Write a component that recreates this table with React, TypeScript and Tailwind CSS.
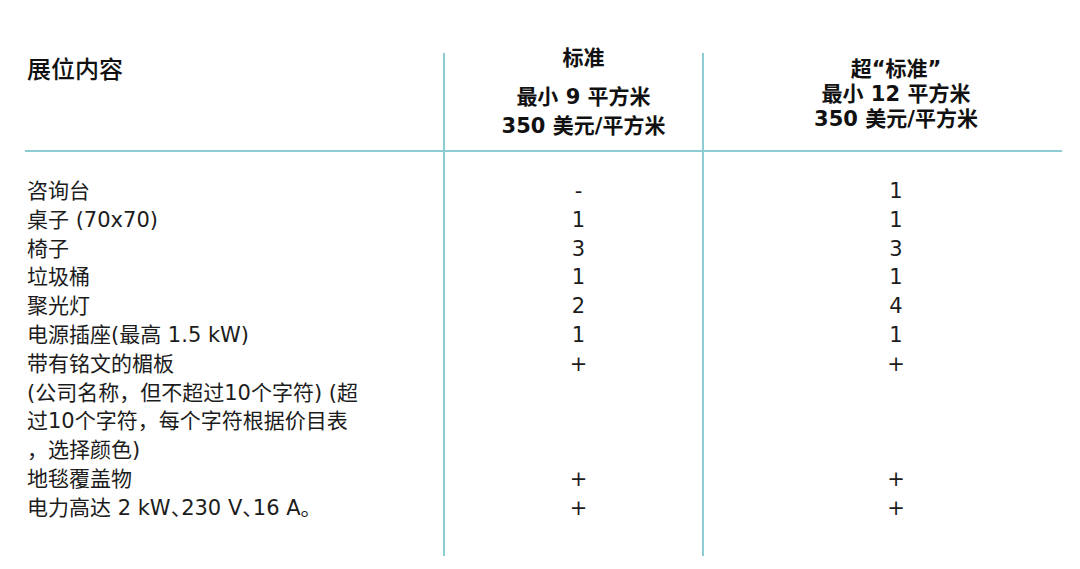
import React from "react";

const rows: { label: React.ReactNode[]; std: string; sup: string }[] = [
  { label: ["咨询台"], std: "-", sup: "1" },
  { label: ["桌子 (70x70)"], std: "1", sup: "1" },
  { label: ["椅子"], std: "3", sup: "3" },
  { label: ["垃圾桶"], std: "1", sup: "1" },
  { label: ["聚光灯"], std: "2", sup: "4" },
  { label: ["电源插座(最高 1.5 kW)"], std: "1", sup: "1" },
  {
    label: [
      "带有铭文的楣板",
      "(公司名称，但不超过10个字符) (超",
      "过10个字符，每个字符根据价目表",
      "，选择颜色)",
    ],
    std: "+",
    sup: "+",
  },
  { label: ["地毯覆盖物"], std: "+", sup: "+" },
  {
    label: [
      <>
        电力高达 2 kW<span className="[font-feature-settings:'halt']">、</span>230 V
        <span className="[font-feature-settings:'halt']">、</span>16 A。
      </>,
    ],
    std: "+",
    sup: "+",
  },
];

const App = () => {
  return (
    <div className="min-h-[569px] w-[1080px] bg-white pt-[53px] pl-[25px] font-['DejaVu_Sans','Noto_Sans_CJK_SC',sans-serif] text-[#1c1c1c]">
      <div className="grid w-[1037px] grid-cols-[420px_259px_358px]">
        {/* header */}
        <div className="h-[99px] border-r-2 border-b-2 border-[#8ccdd3] pl-[2px]">
          <h1 className="mt-[3px] text-[24px] leading-[28px] font-medium text-[#111]">展位内容</h1>
        </div>
        <div className="h-[99px] border-r-2 border-b-2 border-[#8ccdd3] pl-[20px] text-center text-[21px] font-bold text-[#111]">
          <div className="-mt-[9px] leading-[29px]">
            <p className="mb-[10px]">标准</p>
            <p>最小 9 平方米</p>
            <p>350 美元/平方米</p>
          </div>
        </div>
        <div className="h-[99px] border-b-2 border-[#8ccdd3] pl-[26px] text-center text-[21px] font-bold text-[#111]">
          <div className="mt-[4px] leading-[25px]">
            <p>超“标准”</p>
            <p>最小 12 平方米</p>
            <p>350 美元/平方米</p>
          </div>
        </div>

        {/* body */}
        <div className="flex flex-col border-r-2 border-[#8ccdd3] pt-[25px] pb-[33px] pl-[2px] text-[21px] leading-[28.8px]">
          {rows.map((r, i) => (
            <div key={i}>
              {r.label.map((l, j) => (
                <p key={j} className="whitespace-nowrap">
                  {l}
                </p>
              ))}
            </div>
          ))}
        </div>
        <div className="flex flex-col border-r-2 border-[#8ccdd3] pt-[25px] pb-[33px] pl-[10px] text-center text-[21px] leading-[28.8px]">
          {rows.map((r, i) => (
            <div key={i} style={{ height: `${r.label.length * 28.8}px` }}>
              <p>{r.std}</p>
            </div>
          ))}
        </div>
        <div className="flex flex-col pt-[25px] pb-[33px] pl-[26px] text-center text-[21px] leading-[28.8px]">
          {rows.map((r, i) => (
            <div key={i} style={{ height: `${r.label.length * 28.8}px` }}>
              <p>{r.sup}</p>
            </div>
          ))}
        </div>
      </div>
    </div>
  );
};

export default App;
